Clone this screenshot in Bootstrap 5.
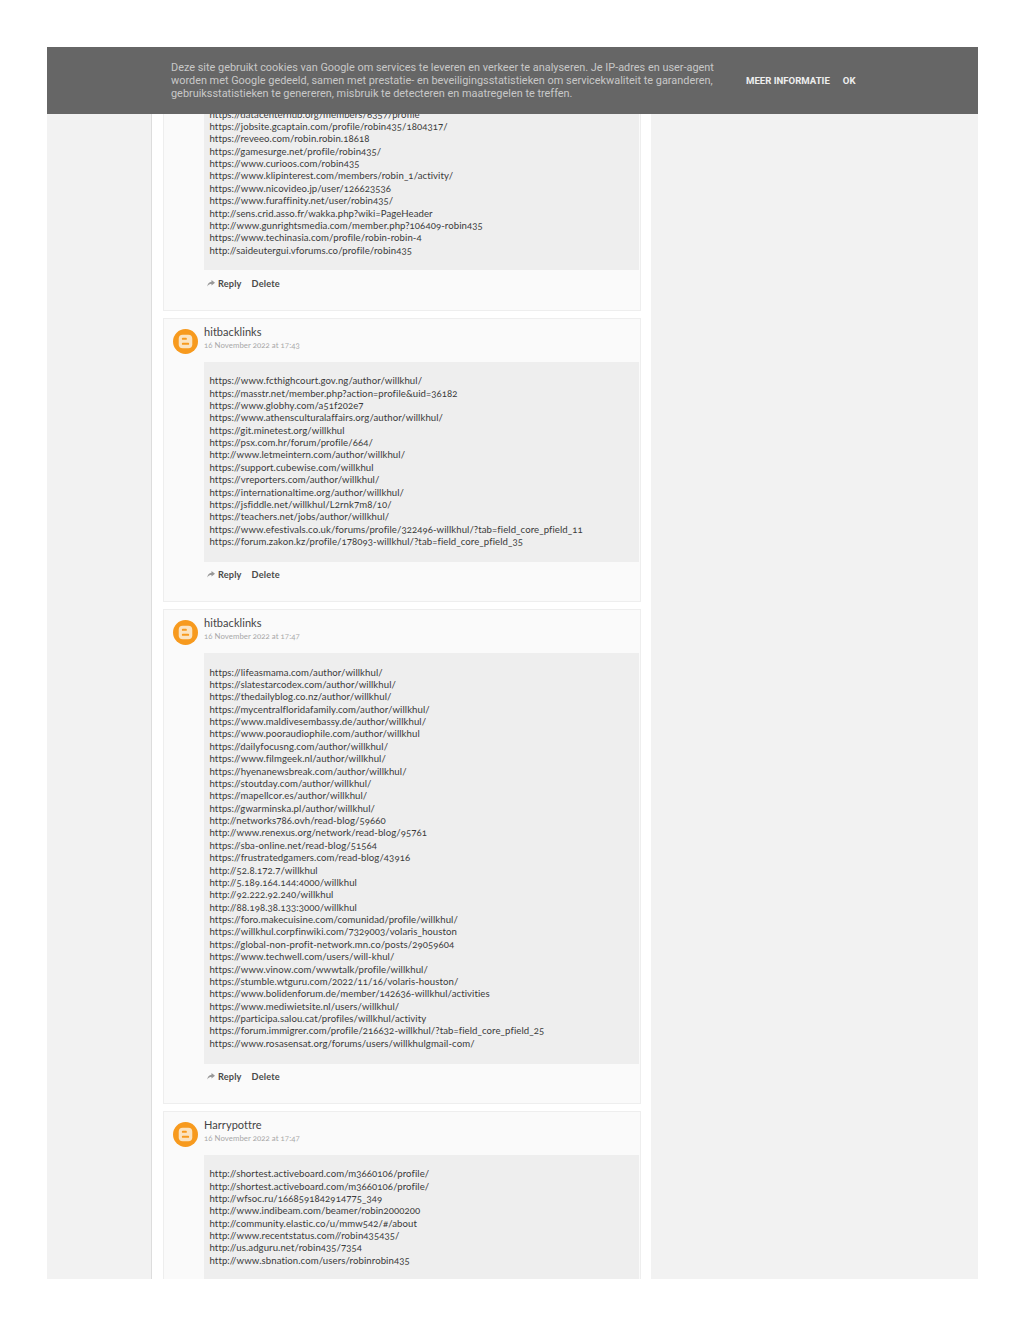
<!DOCTYPE html>
<html lang="nl">
<head>
  <meta charset="UTF-8">
  <title>Comments</title>
  <meta name="viewport" content="width=device-width, initial-scale=1">
  <link href="https://cdn.jsdelivr.net/npm/bootstrap@5.3.3/dist/css/bootstrap.min.css" rel="stylesheet">
  <style>
    body {
      background: #fff;
      font-family: "Lato", "Liberation Sans", sans-serif;
      color: #333;
      height: 1325px;
      overflow: hidden;
    }
    .page-frame {
      margin: 47px 46px 0 47px;
      height: 1232px;
      background: #f2f2f2;
      overflow: hidden;
      position: relative;
    }
    .main-col {
      margin-left: 104px;
      width: 500px;
      min-height: 100%;
      padding: 0 10px 0 11px;
      background: #fff;
      border-left: 1px solid #ddd;
    }
    .comment-box {
      background: #fafafa;
      border: 1px solid #eee;
      margin-bottom: 7px;
      padding: 0 1px 13.5px 40px;
    }
    .comment-head {
      height: 43px;
      position: relative;
      padding-top: 6px;
    }
    .blog-avatar {
      position: absolute;
      left: -31px;
      top: 10px;
      width: 25px;
      height: 25px;
    }
    .author-name {
      font-size: 11px;
      line-height: 14px;
      letter-spacing: .05px;
      color: #444;
    }
    .post-date {
      font-size: 7.8px;
      line-height: 12px;
      letter-spacing: .05px;
      color: #a8a8a8;
      font-variant-numeric: oldstyle-nums;
    }
    .comment-text {
      background: #eee;
      padding: 13.2px 2px 13.4px 5.5px;
      font-size: 9.6px;
      line-height: 12.38px;
      letter-spacing: .08px;
      color: #3a3a3a;
      font-variant-numeric: oldstyle-nums;
      white-space: nowrap;
    }
    /* first comment starts above the cookie bar, its head is out of view */
    .first-box .comment-text { padding-top: 60.6px; }
    .comment-actions {
      height: 26px;
      font-size: 9.2px;
      font-weight: 700;
      letter-spacing: .15px;
      color: #4a4a4a;
      padding-left: 3px;
      gap: 10px;
    }
    .reply-arrow { width: 8px; height: 7px; margin-right: 3px; }
    .cookie-bar {
      position: absolute;
      left: 0;
      top: 0;
      right: 0;
      height: 66.5px;
      background: #666;
      font-family: "Roboto", "Liberation Sans", sans-serif;
      padding: 1px 0 0 124px;
    }
    .cookie-text {
      width: 556px;
      flex: none;
      font-size: 10.9px;
      line-height: 13.2px;
      color: #c8c8c8;
    }
    .cookie-actions { margin-left: 19px; gap: 13px; }
    .cookie-btn {
      font-size: 9.6px;
      font-weight: 700;
      color: #eee;
      white-space: nowrap;
    }
  </style>
</head>
<body>
  <svg class="d-none">
    <symbol id="blogger" viewBox="0 0 24 24">
      <circle cx="12" cy="12" r="12" fill="#f79a1e"/>
      <rect x="5.500" y="5.500" width="13" height="13" rx="3.800" fill="#fbe3c0"/>
      <rect x="8.500" y="8.500" width="4.800" height="1.900" rx=".9" fill="#f79a1e"/>
      <rect x="8.500" y="13.300" width="7" height="1.900" rx=".9" fill="#f79a1e"/>
    </symbol>
    <symbol id="reply" viewBox="0 0 8 7">
      <path d="M4.500 0L8 2.800 4.500 5.600V4C2.800 4 1.400 4.600.3 6.600.4 3.600 2 1.900 4.500 1.700z" fill="#999"/>
    </symbol>
  </svg>

  <div class="page-frame">
    <div class="main-col" id="comments"></div>

    <div class="cookie-bar d-flex align-items-center">
      <div class="cookie-text">Deze site gebruikt cookies van Google om services te leveren en verkeer te analyseren. Je IP-adres en user-agent worden met Google gedeeld, samen met prestatie- en beveiligingsstatistieken om servicekwaliteit te garanderen, gebruiksstatistieken te genereren, misbruik te detecteren en maatregelen te treffen.</div>
      <div class="cookie-actions d-flex">
        <a class="cookie-btn text-decoration-none" href="#">MEER INFORMATIE</a>
        <a class="cookie-btn text-decoration-none" href="#">OK</a>
      </div>
    </div>
  </div>

  <script src="https://cdn.jsdelivr.net/npm/bootstrap@5.3.3/dist/js/bootstrap.bundle.min.js"></script>
  <script>
    const comments = [
      { links: [
        'https://datacenterhub.org/members/6357/profile',
        'https://jobsite.gcaptain.com/profile/robin435/1804317/',
        'https://reveeo.com/robin.robin.18618',
        'https://gamesurge.net/profile/robin435/',
        'https://www.curioos.com/robin435',
        'https://www.klipinterest.com/members/robin_1/activity/',
        'https://www.nicovideo.jp/user/126623536',
        'https://www.furaffinity.net/user/robin435/',
        'http://sens.crid.asso.fr/wakka.php?wiki=PageHeader',
        'http://www.gunrightsmedia.com/member.php?106409-robin435',
        'https://www.techinasia.com/profile/robin-robin-4',
        'http://saideutergui.vforums.co/profile/robin435'
      ]},
      { name: 'hitbacklinks', date: '16 November 2022 at 17:43', links: [
        'https://www.fcthighcourt.gov.ng/author/willkhul/',
        'https://masstr.net/member.php?action=profile&uid=36182',
        'https://www.globhy.com/a51f202e7',
        'https://www.athensculturalaffairs.org/author/willkhul/',
        'https://git.minetest.org/willkhul',
        'https://psx.com.hr/forum/profile/664/',
        'http://www.letmeintern.com/author/willkhul/',
        'https://support.cubewise.com/willkhul',
        'https://vreporters.com/author/willkhul/',
        'https://internationaltime.org/author/willkhul/',
        'https://jsfiddle.net/willkhul/L2rnk7m8/10/',
        'https://teachers.net/jobs/author/willkhul/',
        'https://www.efestivals.co.uk/forums/profile/322496-willkhul/?tab=field_core_pfield_11',
        'https://forum.zakon.kz/profile/178093-willkhul/?tab=field_core_pfield_35'
      ]},
      { name: 'hitbacklinks', date: '16 November 2022 at 17:47', links: [
        'https://lifeasmama.com/author/willkhul/',
        'https://slatestarcodex.com/author/willkhul/',
        'https://thedailyblog.co.nz/author/willkhul/',
        'https://mycentralfloridafamily.com/author/willkhul/',
        'https://www.maldivesembassy.de/author/willkhul/',
        'https://www.pooraudiophile.com/author/willkhul',
        'https://dailyfocusng.com/author/willkhul/',
        'https://www.filmgeek.nl/author/willkhul/',
        'https://hyenanewsbreak.com/author/willkhul/',
        'https://stoutday.com/author/willkhul/',
        'https://mapellcor.es/author/willkhul/',
        'https://gwarminska.pl/author/willkhul/',
        'http://networks786.ovh/read-blog/59660',
        'http://www.renexus.org/network/read-blog/95761',
        'https://sba-online.net/read-blog/51564',
        'https://frustratedgamers.com/read-blog/43916',
        'http://52.8.172.7/willkhul',
        'http://5.189.164.144:4000/willkhul',
        'http://92.222.92.240/willkhul',
        'http://88.198.38.133:3000/willkhul',
        'https://foro.makecuisine.com/comunidad/profile/willkhul/',
        'https://willkhul.corpfinwiki.com/7329003/volaris_houston',
        'https://global-non-profit-network.mn.co/posts/29059604',
        'https://www.techwell.com/users/will-khul/',
        'https://www.vinow.com/wwwtalk/profile/willkhul/',
        'https://stumble.wtguru.com/2022/11/16/volaris-houston/',
        'https://www.bolidenforum.de/member/142636-willkhul/activities',
        'https://www.mediwietsite.nl/users/willkhul/',
        'https://participa.salou.cat/profiles/willkhul/activity',
        'https://forum.immigrer.com/profile/216632-willkhul/?tab=field_core_pfield_25',
        'https://www.rosasensat.org/forums/users/willkhulgmail-com/'
      ]},
      // last one runs past the bottom of the frame, so no actions row
      { name: 'Harrypottre', date: '16 November 2022 at 17:47', noActions: true, links: [
        'http://shortest.activeboard.com/m3660106/profile/',
        'http://shortest.activeboard.com/m3660106/profile/',
        'http://wfsoc.ru/1668591842914775_349',
        'http://www.indibeam.com/beamer/robin2000200',
        'http://community.elastic.co/u/mmw542/#/about',
        'http://www.recentstatus.com//robin435435/',
        'http://us.adguru.net/robin435/7354',
        'http://www.sbnation.com/users/robinrobin435'
      ]}
    ];

    const col = document.getElementById('comments');
    comments.forEach((c, i) => {
      const box = document.createElement('div');
      box.className = 'comment-box' + (i === 0 ? ' first-box' : '');
      const head = c.name ? `
        <div class="comment-head">
          <svg class="blog-avatar"><use href="#blogger"/></svg>
          <div class="author-name">${c.name}</div>
          <div class="post-date">${c.date}</div>
        </div>` : '';
      const actions = c.noActions ? '' : `
        <div class="comment-actions d-flex align-items-center">
          <span class="d-flex align-items-center"><svg class="reply-arrow"><use href="#reply"/></svg>Reply</span>
          <span>Delete</span>
        </div>`;
      const lines = c.links.map(l => l.replace(/&/g, '&amp;')).join('<br>');
      box.innerHTML = `${head}
        <div class="comment-text">${lines}</div>${actions}`;
      col.appendChild(box);
    });
  </script>
</body>
</html>
